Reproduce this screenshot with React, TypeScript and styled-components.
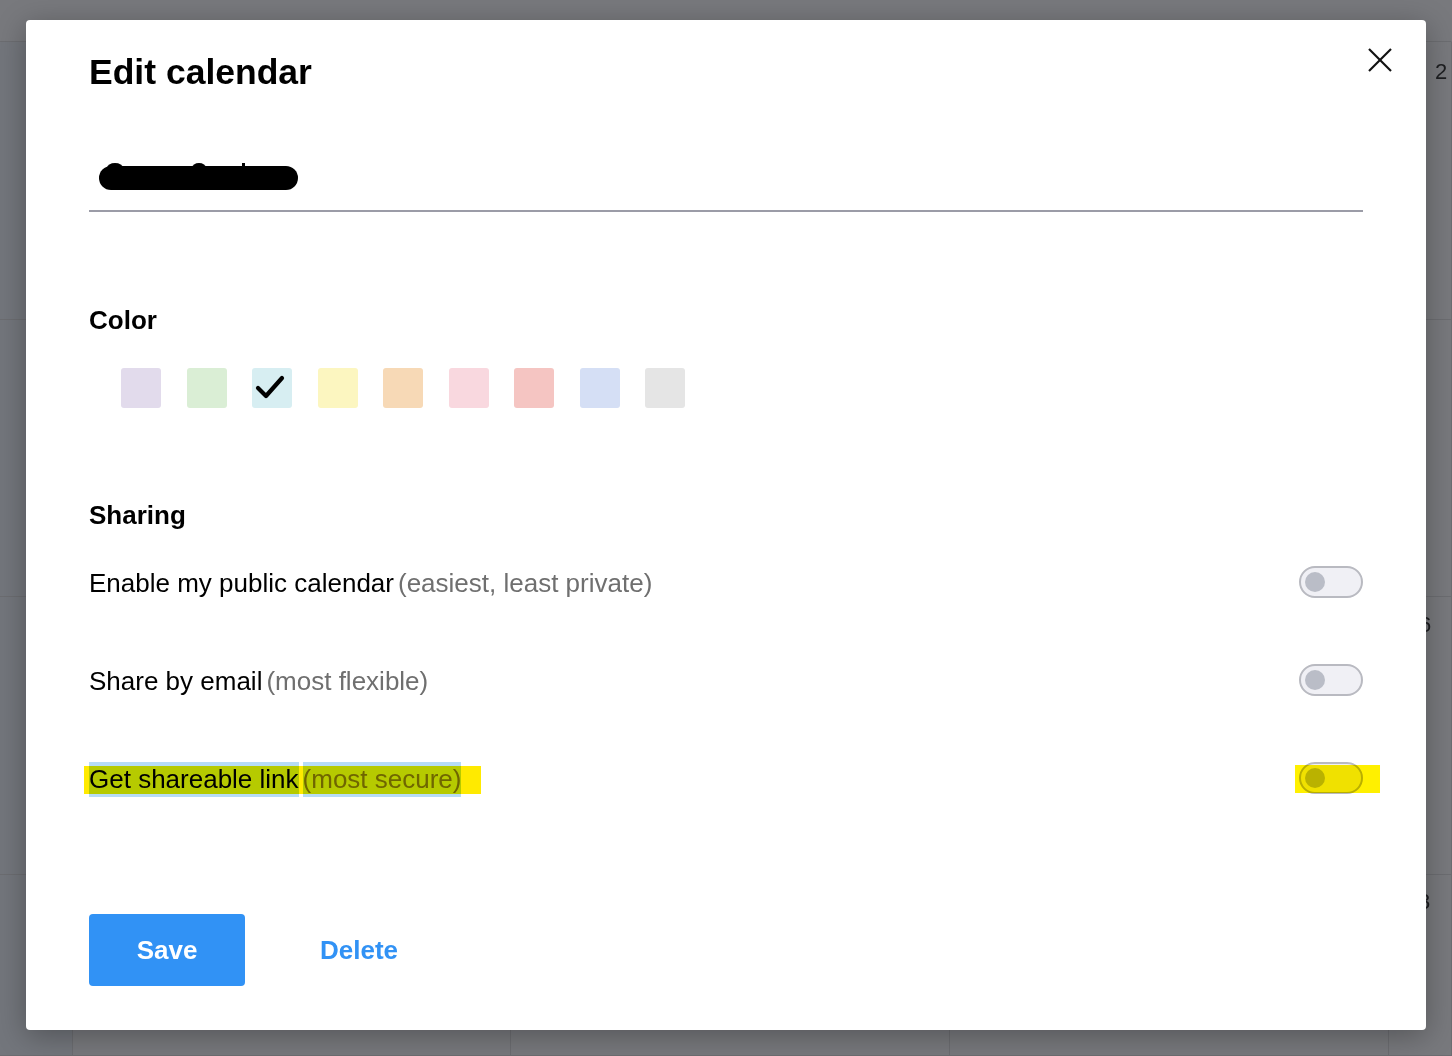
import React from 'react';
import styled, { createGlobalStyle, css } from 'styled-components';

const GlobalStyle = createGlobalStyle`
  html, body { margin: 0; padding: 0; }
  body {
    font-family: "Liberation Sans", Arial, Helvetica, sans-serif;
    background: #78797d;
  }
  * { box-sizing: border-box; }
`;

const Page = styled.div`
  position: relative;
  width: 1452px;
  height: 1056px;
  overflow: hidden;
`;

const Backdrop = styled.div`
  display: grid;
  grid-template-columns: 73px 438px 439px 439px 1fr;
  grid-template-rows: 42px 278px 277px 278px 1fr;
  width: 100%;
  height: 100%;
  background: #78797d;
`;

const Cell = styled.div<{ $tint?: boolean; $header?: boolean; $padLeft?: number; $padTop?: number }>`
  border-right: 1px solid ${(p) => (p.$header ? 'transparent' : '#6c6d71')};
  border-bottom: 1px solid #6c6d71;
  background: ${(p) => (p.$tint ? '#73767c' : 'transparent')};
  padding-left: ${(p) => p.$padLeft ?? 0}px;
  padding-top: ${(p) => p.$padTop ?? 0}px;
  font-size: 22px;
  line-height: 22px;
  color: #1d1e21;
`;

const Modal = styled.div`
  position: absolute;
  left: 26px;
  top: 20px;
  width: 1400px;
  height: 1010px;
  background: #ffffff;
  border-radius: 4px;
  box-shadow: 0 6px 30px rgba(0, 0, 0, 0.3);
  padding: 32px 63px 44px;
  display: flex;
  flex-direction: column;
`;

const CloseButton = styled.button`
  position: absolute;
  top: 28px;
  right: 34px;
  width: 24px;
  height: 24px;
  padding: 0;
  border: none;
  background: transparent;
  display: flex;
`;

const Title = styled.h1`
  margin: 0;
  font-size: 35.5px;
  line-height: 40px;
  font-weight: 700;
  color: #000;
`;

const NameField = styled.div`
  margin-top: 58px;
  height: 62px;
  border-bottom: 2px solid #9b9ca7;
  padding: 12px 0 0 10px;
  display: flex;
  align-items: flex-start;
`;

const SectionLabel = styled.h2<{ $top: number }>`
  margin: ${(p) => p.$top}px 0 0;
  font-size: 26px;
  line-height: 30px;
  font-weight: 700;
  color: #000;
`;

const SwatchRow = styled.div`
  margin-top: 33px;
  padding-left: 32px;
  display: flex;
  gap: 25.5px;
`;

const Swatch = styled.div<{ $color: string }>`
  width: 40px;
  height: 40px;
  border-radius: 3px;
  background: ${(p) => p.$color};
  display: flex;
`;

const SharingRow = styled.div<{ $top: number }>`
  margin-top: ${(p) => p.$top}px;
  height: 32px;
  display: flex;
  justify-content: space-between;
  align-items: flex-start;
`;

const RowLabel = styled.div<{ $marked?: boolean }>`
  position: relative;
  display: inline-block;
  margin-top: 2px;
  font-size: 26px;
  line-height: 30px;
  color: #000;
  ${(p) =>
    p.$marked &&
    css`
      &::after {
        content: '';
        position: absolute;
        left: -5px;
        right: -20px;
        top: 2px;
        height: 28px;
        background: #ffea00;
        mix-blend-mode: multiply;
        pointer-events: none;
      }
    `}
`;

const Main = styled.span<{ $marked?: boolean }>`
  ${(p) =>
    p.$marked &&
    css`
      background: #b6dcf6;
      padding: 2px 0 3px;
    `}
`;

const Hint = styled.span<{ $marked?: boolean }>`
  margin-left: 4px;
  color: #6f6f6f;
  ${(p) =>
    p.$marked &&
    css`
      background: #b6dcf6;
      padding: 2px 0 3px;
    `}
`;

const Toggle = styled.div<{ $marked?: boolean }>`
  position: relative;
  width: 64px;
  height: 32px;
  border: 2px solid #b9bac1;
  border-radius: 16px;
  background: #f0f0f5;
  display: flex;
  align-items: center;
  padding-left: 4px;
  ${(p) =>
    p.$marked &&
    css`
      &::after {
        content: '';
        position: absolute;
        left: -6px;
        right: -19px;
        top: 1px;
        height: 28px;
        background: #fff000;
        mix-blend-mode: multiply;
        pointer-events: none;
      }
    `}
`;

const Knob = styled.span`
  width: 20px;
  height: 20px;
  border-radius: 50%;
  background: #babdc7;
`;

const ButtonRow = styled.div`
  margin-top: 120px;
  display: flex;
  gap: 36px;
`;

const ActionButton = styled.button<{ $primary?: boolean }>`
  width: 156px;
  height: 72px;
  border: none;
  border-radius: 4px;
  font-family: "Liberation Sans", Arial, Helvetica, sans-serif;
  font-size: 26px;
  font-weight: 700;
  background: ${(p) => (p.$primary ? '#3192f5' : 'transparent')};
  color: ${(p) => (p.$primary ? '#ffffff' : '#3192f5')};
  padding: 0;
`;

const swatches = [
  '#e2dbec',
  '#daeed5',
  '#d7eef2',
  '#fcf6c0',
  '#f7d9b6',
  '#f9d8df',
  '#f5c5c2',
  '#d5dff5',
  '#e5e5e5',
];

const rows = [
  { main: 'Enable my public calendar', hint: '(easiest, least private)', top: 36 },
  { main: 'Share by email', hint: '(most flexible)', top: 66 },
  { main: 'Get shareable link', hint: '(most secure)', top: 66, marked: true },
];

type CellDef = { tint?: boolean; header?: boolean; num?: string; padLeft?: number; padTop?: number };

const backdropCells: CellDef[] = [];
for (let r = 0; r < 5; r++) {
  for (let c = 0; c < 5; c++) {
    const cell: CellDef = { tint: c === 0 && r > 0, header: r === 0 };
    if (c === 4 && r === 1) Object.assign(cell, { num: '2', padLeft: 46, padTop: 19 });
    if (c === 4 && r === 3) Object.assign(cell, { num: '6', padLeft: 30, padTop: 17 });
    if (c === 4 && r === 4) Object.assign(cell, { num: '3', padLeft: 29, padTop: 16 });
    backdropCells.push(cell);
  }
}

export default function App() {
  return (
    <>
      <GlobalStyle />
      <Page>
        <Backdrop>
          {backdropCells.map((c, i) => (
            <Cell key={i} $tint={c.tint} $header={c.header} $padLeft={c.padLeft} $padTop={c.padTop}>
              {c.num}
            </Cell>
          ))}
        </Backdrop>
        <Modal>
          <CloseButton aria-label="Close">
            <svg width="24" height="24" viewBox="0 0 24 24">
              <line x1="1" y1="1" x2="23" y2="23" stroke="#111" strokeWidth="2.2" />
              <line x1="23" y1="1" x2="1" y2="23" stroke="#111" strokeWidth="2.2" />
            </svg>
          </CloseButton>
          <Title>Edit calendar</Title>
          <NameField>
            <svg width="200" height="29" viewBox="0 0 200 29">
              <ellipse cx="16" cy="6" rx="8" ry="5" fill="#000" />
              <ellipse cx="100" cy="6" rx="7" ry="5" fill="#000" />
              <rect x="143" y="1" width="3" height="6" fill="#000" />
              <rect x="0" y="4" width="199" height="24" rx="12" fill="#000" />
            </svg>
          </NameField>
          <SectionLabel $top={93}>Color</SectionLabel>
          <SwatchRow>
            {swatches.map((color, i) => (
              <Swatch key={color} $color={color}>
                {i === 2 && (
                  <svg width="40" height="40" viewBox="0 0 40 40">
                    <polyline
                      points="6,20 14,28 30,10"
                      fill="none"
                      stroke="#000"
                      strokeWidth="4.2"
                      strokeLinecap="round"
                      strokeLinejoin="round"
                    />
                  </svg>
                )}
              </Swatch>
            ))}
          </SwatchRow>
          <SectionLabel $top={92}>Sharing</SectionLabel>
          {rows.map((row) => (
            <SharingRow key={row.main} $top={row.top}>
              <RowLabel $marked={row.marked}>
                <Main $marked={row.marked}>{row.main}</Main>
                <Hint $marked={row.marked}>{row.hint}</Hint>
              </RowLabel>
              <Toggle $marked={row.marked}>
                <Knob />
              </Toggle>
            </SharingRow>
          ))}
          <ButtonRow>
            <ActionButton $primary>Save</ActionButton>
            <ActionButton>Delete</ActionButton>
          </ButtonRow>
        </Modal>
      </Page>
    </>
  );
}
